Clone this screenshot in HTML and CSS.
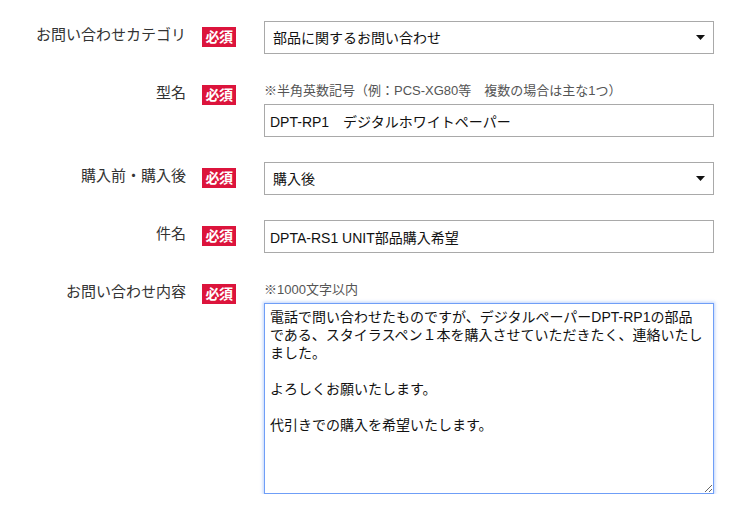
FILE: index.html
```html
<!DOCTYPE html>
<html lang="ja">
<head>
<meta charset="utf-8">
<title>お問い合わせフォーム</title>
<link rel="stylesheet" href="styles.css">
</head>
<body>
<form class="form">
  <div class="row">
    <div class="label">お問い合わせカテゴリ</div>
    <span class="badge">必須</span>
    <div class="field">
      <div class="select-wrap">
        <select class="select">
          <option>部品に関するお問い合わせ</option>
        </select>
        <svg class="arrow" width="9" height="5" viewBox="0 0 9 5"><path d="M0 0H9L4.5 5Z" fill="#111"/></svg>
      </div>
    </div>
  </div>

  <div class="row">
    <div class="label">型名</div>
    <span class="badge">必須</span>
    <div class="field">
      <div class="hint">※半角英数記号（例：PCS-XG80等　複数の場合は主な1つ）</div>
      <input class="input" type="text" value="DPT-RP1　デジタルホワイトペーパー">
    </div>
  </div>

  <div class="row">
    <div class="label">購入前・購入後</div>
    <span class="badge">必須</span>
    <div class="field">
      <div class="select-wrap">
        <select class="select">
          <option>購入後</option>
        </select>
        <svg class="arrow" width="9" height="5" viewBox="0 0 9 5"><path d="M0 0H9L4.5 5Z" fill="#111"/></svg>
      </div>
    </div>
  </div>

  <div class="row">
    <div class="label">件名</div>
    <span class="badge">必須</span>
    <div class="field">
      <input class="input" type="text" value="DPTA-RS1 UNIT部品購入希望">
    </div>
  </div>

  <div class="row">
    <div class="label">お問い合わせ内容</div>
    <span class="badge">必須</span>
    <div class="field">
      <div class="hint">※1000文字以内</div>
      <textarea class="textarea">電話で問い合わせたものですが、デジタルペーパーDPT-RP1の部品である、スタイラスペン１本を購入させていただきたく、連絡いたしました。

よろしくお願いたします。

代引きでの購入を希望いたします。</textarea>
    </div>
  </div>
</form>
</body>
</html>
```

FILE: styles.css
```css
html, body {
  margin: 0;
  padding: 0;
  background: #fff;
}

body {
  font-family: "Liberation Sans", "Noto Sans CJK JP", sans-serif;
  color: #333;
}

.form {
  display: flex;
  flex-direction: column;
  gap: 25px;
  padding-top: 21px;
}

.row {
  display: flex;
  align-items: flex-start;
}

.label {
  width: 186px;
  flex: none;
  text-align: right;
  font-size: 15px;
  line-height: 22px;
  padding-top: 3px;
  color: #333;
  white-space: nowrap;
}

.badge {
  flex: none;
  margin-left: 16px;
  margin-top: 6px;
  width: 34px;
  height: 20px;
  line-height: 20px;
  background: #dc143c;
  color: #fff;
  font-size: 14px;
  font-weight: bold;
  text-align: center;
  letter-spacing: -0.5px;
}

.field {
  margin-left: 28px;
  width: 450px;
  flex: none;
  display: flex;
  flex-direction: column;
}

.hint {
  font-size: 13px;
  line-height: 24px;
  margin-bottom: 1px;
  color: #555;
  white-space: nowrap;
}

.select-wrap {
  position: relative;
}

.select,
.input,
.textarea {
  box-sizing: border-box;
  width: 450px;
  margin: 0;
  font-family: "Liberation Sans", "Noto Sans CJK JP", sans-serif;
  font-size: 14px;
  color: #111;
  background: #fff;
  border: 1px solid #a9a9a9;
  border-radius: 0;
  outline: none;
}

.select {
  -webkit-appearance: none;
  appearance: none;
  height: 33px;
  padding: 0 24px 0 8px;
}

.arrow {
  position: absolute;
  right: 9px;
  top: 14px;
  pointer-events: none;
}

.input {
  height: 33px;
  padding: 0 5px;
}

.textarea {
  display: block;
  height: 191px;
  padding: 4px 7px 4px 5px;
  line-height: 18px;
  border-color: #6f9ef7;
  box-shadow: 0 0 3px 1px rgba(110, 158, 247, 0.45);
  resize: both;
}
```
